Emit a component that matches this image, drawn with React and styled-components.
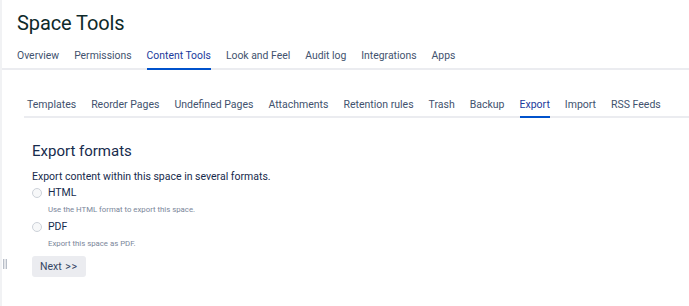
import React from "react";
import styled, { createGlobalStyle } from "styled-components";

const Global = createGlobalStyle`
  html, body { margin: 0; padding: 0; background: #fff; }
  body { font-family: Roboto, "Noto Sans", Arial, sans-serif; color: #172b4d; }
  * { box-sizing: border-box; }
`;

const Page = styled.div`
  display: flex;
  min-height: 100vh;
`;

const SidebarEdge = styled.div`
  position: relative;
  width: 2px;
  flex: none;
  background: #f1f2f4;
`;

const Handle = styled.div`
  position: absolute;
  left: 3px;
  top: 259px;
  width: 4px;
  height: 10px;
  border-left: 1px solid #b8bec8;
  border-right: 1px solid #b8bec8;
  background: #e4e6ea;
`;

const Main = styled.main`
  flex: 1;
  min-width: 0;
`;

const Header = styled.header`
  padding: 11px 0 0 15px;
  border-bottom: 2px solid #ebecf0;
`;

const Title = styled.h1`
  margin: 0;
  font-size: 20px;
  line-height: 24px;
  font-weight: 400;
  color: #0e2a2a;
  letter-spacing: -0.1px;
`;

const TabList = styled.nav`
  display: flex;
  gap: ${(p) => p.$gap}px;
  margin-top: ${(p) => p.$top}px;
`;

const Tab = styled.a`
  display: block;
  font-size: ${(p) => p.$size}px;
  line-height: 14px;
  padding-bottom: ${(p) => p.$pb}px;
  margin-bottom: -2px;
  border-bottom: 2px solid ${(p) => (p.$active ? "#0052cc" : "transparent")};
  color: ${(p) => (p.$active ? "#1b3a9c" : "#42526e")};
  white-space: nowrap;
  cursor: pointer;
`;

const SubNav = styled.div`
  margin: 28px 0 0 22px;
  padding-left: 3px;
  border-bottom: 2px solid #ebecf0;
`;

const Body = styled.section`
  padding: 23px 0 0 30px;
`;

const Heading = styled.h2`
  margin: 0;
  font-size: 15px;
  line-height: 20px;
  font-weight: 400;
  color: #172b4d;
`;

const Intro = styled.p`
  margin: 9px 0 0;
  font-size: 10.5px;
  line-height: 14px;
  color: #172b4d;
`;

const Options = styled.div`
  display: flex;
  flex-direction: column;
  gap: 5px;
  margin-top: 2px;
`;

const Option = styled.div`
  display: flex;
  flex-direction: column;
`;

const RadioRow = styled.label`
  display: flex;
  align-items: center;
  gap: 6px;
  font-size: 10.5px;
  line-height: 14px;
  color: #172b4d;
`;

const Radio = styled.span`
  width: 10px;
  height: 10px;
  border-radius: 50%;
  border: 1px solid #cdd2d9;
  background: #f7f8f9;
  flex: none;
`;

const Help = styled.div`
  margin: 5px 0 0 16px;
  font-size: 7.8px;
  line-height: 10px;
  color: #7a869a;
`;

const Button = styled.button`
  display: block;
  margin-top: 7px;
  height: 21px;
  padding: 0 8px;
  border: none;
  border-radius: 3px;
  background: #ebecf0;
  color: #344563;
  font-family: inherit;
  font-size: 10.5px;
  line-height: 21px;
  cursor: pointer;
`;

const Chevrons = styled.span`
  letter-spacing: 0.8px;
  margin-left: 1px;
`;

const mainTabs = ["Overview", "Permissions", "Content Tools", "Look and Feel", "Audit log", "Integrations", "Apps"];
const subTabs = ["Templates", "Reorder Pages", "Undefined Pages", "Attachments", "Retention rules", "Trash", "Backup", "Export", "Import", "RSS Feeds"];

export default function App() {
  return (
    <>
      <Global />
      <Page>
        <SidebarEdge>
          <Handle />
        </SidebarEdge>
        <Main>
          <Header>
            <Title>Space Tools</Title>
            <TabList $gap={15} $top={14}>
              {mainTabs.map((t) => (
                <Tab key={t} $size={10.4} $pb={5} $active={t === "Content Tools"}>{t}</Tab>
              ))}
            </TabList>
          </Header>
          <SubNav>
            <TabList $gap={15} $top={0}>
              {subTabs.map((t) => (
                <Tab key={t} $size={10.5} $pb={4} $active={t === "Export"}>{t}</Tab>
              ))}
            </TabList>
          </SubNav>
          <Body>
            <Heading>Export formats</Heading>
            <Intro>Export content within this space in several formats.</Intro>
            <Options>
              <Option>
                <RadioRow><Radio />HTML</RadioRow>
                <Help>Use the HTML format to export this space.</Help>
              </Option>
              <Option>
                <RadioRow><Radio />PDF</RadioRow>
                <Help>Export this space as PDF.</Help>
              </Option>
            </Options>
            <Button>Next <Chevrons>&gt;&gt;</Chevrons></Button>
          </Body>
        </Main>
      </Page>
    </>
  );
}
